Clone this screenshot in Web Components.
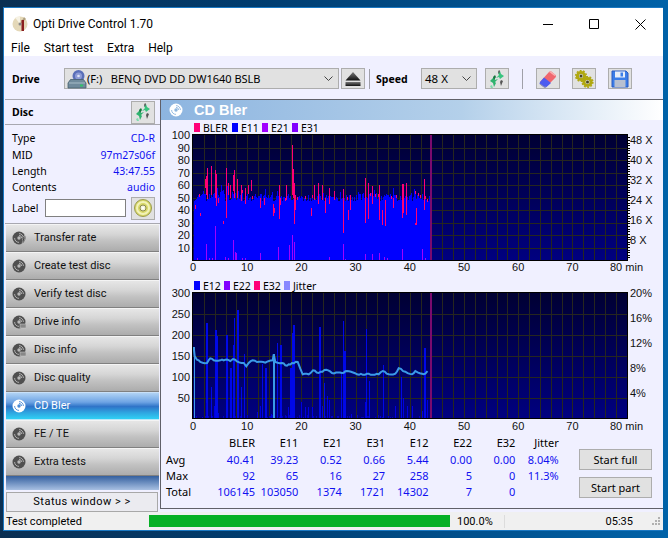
<!doctype html>
<html>
<head>
<meta charset="utf-8">
<title>Opti Drive Control 1.70</title>
<style>
    html, body { margin: 0; height: 100%; overflow: hidden; }
    body {
        width: 668px;
        height: 538px;
        box-sizing: border-box;
        padding: 7px 5px 7px 3px;
        background: linear-gradient(90deg, #0a2f52 0%, #003d70 40%, #0062a8 100%);
        font: 10.5px "Noto Sans", sans-serif;
    }
</style>
</head>
<body>
<od-window>
    <od-titlebar slot="top">Opti Drive Control 1.70</od-titlebar>
    <od-menu slot="top"></od-menu>
    <od-toolbar slot="top"></od-toolbar>

    <od-sidebar slot="side"></od-sidebar>

    <od-panel slot="main" heading="CD Bler">
        <od-chart kind="bler" max="100" step="10" unit="X" style="margin-top:1px">
            <od-legend slot="legend" color="#ff0077" style="width:38px">BLER</od-legend>
            <od-legend slot="legend" color="#0000ff" style="width:30px">E11</od-legend>
            <od-legend slot="legend" color="#a000ff" style="width:30px">E21</od-legend>
            <od-legend slot="legend" color="#8000ff" style="width:30px">E31</od-legend>
        </od-chart>
        <od-chart kind="e12" max="300" step="50" unit="%" style="margin-top:5px">
            <od-legend slot="legend" color="#0000ff" style="width:30px">E12</od-legend>
            <od-legend slot="legend" color="#8000ff" style="width:30px">E22</od-legend>
            <od-legend slot="legend" color="#ff0077" style="width:30px">E32</od-legend>
            <od-legend slot="legend" color="#8888ff" style="width:40px">Jitter</od-legend>
        </od-chart>
        <od-stats></od-stats>
    </od-panel>

    <od-statusbar slot="bottom"></od-statusbar>
</od-window>

<script>
    // small helper, every element stamps its own shadow root
    function stamp(el, css, html) {
        const root = el.attachShadow({mode: 'open'});
        root.innerHTML = `<style>${css}</style>${html}`;
        return root;
    }

    const discShape = (fill, cut) => `
        <circle cx="7" cy="7" r="6.5" fill="${fill}"/>
        <path d="M7 2.6A4.4 4.4 0 0 1 11.4 7M7 4.4A2.6 2.6 0 0 1 9.6 7" fill="none" stroke="${cut}" stroke-width=".9"/>
        <path d="M7 11.4A4.4 4.4 0 0 1 2.6 7" fill="none" stroke="${cut}" stroke-width=".9"/>
        <circle cx="7" cy="7" r="1.7" fill="${cut}"/>`;

    const ICONS = {
        arrows: `<svg width="20" height="20" viewBox="0 0 20 20">
            <path d="M3 12l4-4 1 3 3-1-3 3 1 1-2 4-1-4z" fill="#2fb36f"/>
            <path d="M6 8l2-2 1 2-2 3z" fill="#15763f"/>
            <path d="M17 7l-4 3-1-2-3 1 3-3-1-2 2-2 1 3z" fill="#38c47e"/>
            <path d="M11 3l1-2 1 1-1 3zM14 11l2 1-2 5-1-4z" fill="#555"/>
            <path d="M3 17l2-1 1 3-2 0z" fill="#7fdcae"/></svg>`,
        eject: `<svg width="18" height="16" viewBox="0 0 18 16">
            <defs><linearGradient id="e" x1="0" y1="0" x2="0" y2="1"><stop offset="0" stop-color="#777"/><stop offset="1" stop-color="#111"/></linearGradient></defs>
            <path d="M9 1l7.500 8.500H1.500z" fill="url(#e)"/><rect x="1.500" y="11" width="15" height="4" fill="url(#e)"/></svg>`,
        eraser: `<svg width="20" height="20" viewBox="0 0 20 20">
            <path d="M2 13L11 3q1.500-1.500 3 0l3.500 3q1 1.300 0 2.600L9 17z" fill="#f0686e"/>
            <path d="M11 3q1.500-1.500 3 0l3.500 3-1 1L12 3.500z" fill="#f9b0b0"/>
            <path d="M2 13l4-4.500 7 5.500L8.500 18q-1.500 1-3 0L2 15.500q-1-1 0-2.500z" fill="#4c5cf0"/>
            <path d="M2 15l4 3q1 .5 2 0" fill="none" stroke="#9a9aa8" stroke-width="1"/></svg>`,
        gears: `<svg width="20" height="20" viewBox="0 0 20 20">
            <g fill="none" stroke="#b0a810">
            <circle cx="7" cy="7" r="3.600" stroke-width="3"/><circle cx="7" cy="7" r="5.300" stroke-width="1.600" stroke-dasharray="1.800 1.500"/>
            <circle cx="13.500" cy="13" r="3.600" stroke-width="3"/><circle cx="13.500" cy="13" r="5.300" stroke-width="1.600" stroke-dasharray="1.800 1.500"/>
            </g><circle cx="7" cy="7" r="1.500" fill="#4a4520"/><circle cx="13.500" cy="13" r="1.500" fill="#4a4520"/></svg>`,
        save: `<svg width="18" height="18" viewBox="0 0 18 18">
            <path d="M1 1h14l2 2v14H1z" fill="#3b7de8" stroke="#2a5bc0"/>
            <rect x="4" y="1.500" width="10" height="6" fill="#e8eef8"/><rect x="9.500" y="2.500" width="2.500" height="4" fill="#3b7de8"/>
            <rect x="3.500" y="10" width="11" height="7" fill="#b8c0d0"/></svg>`,
        cd: `<svg width="20" height="20" viewBox="0 0 20 20">
            <circle cx="10" cy="10" r="8.500" fill="#d8d868" stroke="#9a9a50"/>
            <circle cx="10" cy="10" r="6" fill="none" stroke="#f2f2b8" stroke-width="2"/>
            <circle cx="10" cy="10" r="3" fill="#f4f4d8" stroke="#8a8a50"/><circle cx="10" cy="10" r="1.200" fill="#fff"/></svg>`,
        app: `<svg width="16" height="18" viewBox="0 0 16 18">
            <circle cx="8" cy="9" r="7.500" fill="#e4d8b8"/>
            <path d="M8 9L3 2.500A7.500 7.500 0 0 1 8 1.500z" fill="#f6f2e4"/>
            <path d="M8 9l4-7 2 2z" fill="#b0a080"/>
            <rect x="9.500" y="5" width="2.500" height="11" fill="#8a1f1f"/>
            <circle cx="8" cy="9" r="1.500" fill="#888"/></svg>`,
        drive: `<svg width="20" height="20" viewBox="0 0 20 20">
            <circle cx="11.500" cy="7" r="6" fill="#5a6fb8"/><circle cx="11.500" cy="7" r="3.500" fill="#8d9bd6"/><circle cx="11.500" cy="7" r="1.300" fill="#dfe4f6"/>
            <path d="M3.500 10.500h13l2.500 3.500v5H1v-5z" fill="#6f8a9c" stroke="#46606f" stroke-width=".8"/>
            <path d="M2 14h16" stroke="#a8bcc8"/>
            <rect x="13" y="15.500" width="3" height="2" fill="#2fc46a"/></svg>`,
        header: `<svg width="14" height="14" viewBox="0 0 14 14">${discShape('#fff', '#8fb6de')}</svg>`,
        navWhite: `<svg width="14" height="14" viewBox="0 0 14 14">${discShape('#fff', '#4a8ad4')}</svg>`,
        nav: `<svg width="14" height="14" viewBox="0 0 14 14">${discShape('#505050', '#b8b8b8')}</svg>`,
        navRate: `<svg width="14" height="14" viewBox="0 0 14 14">${discShape('#505050', '#b8b8b8')}<path d="M11 6l2-2-1 4 1 1-3 4 1-4-1-1z" fill="#444" stroke="#ccc" stroke-width=".5"/></svg>`,
        navInfo: `<svg width="14" height="14" viewBox="0 0 14 14">${discShape('#505050', '#b8b8b8')}<rect x="8" y="9" width="6" height="4" fill="#888" stroke="#ccc" stroke-width=".5"/></svg>`
    };

    customElements.define('od-icon', class extends HTMLElement {
        connectedCallback() {
            stamp(this, ':host{display:inline-flex;align-items:center;justify-content:center;line-height:0}',
                ICONS[this.getAttribute('name')]);
        }
    });

    customElements.define('od-window', class extends HTMLElement {
        connectedCallback() {
            stamp(this, `
                :host { display: flex; flex-direction: column; width: 660px; height: 524px; box-sizing: border-box;
                    background: #f0f0ff; border: 1px solid #1a78c2; border-right-width: 0; color: #000; }
                .body { flex: 1; display: flex; min-height: 0; }
                .side { width: 156px; flex: none; }
                .main { flex: 1; min-width: 0; }
            `, `
                <slot name="top"></slot>
                <div class="body">
                    <div class="side"><slot name="side"></slot></div>
                    <div class="main"><slot name="main"></slot></div>
                </div>
                <slot name="bottom"></slot>
            `);
        }
    });

    customElements.define('od-titlebar', class extends HTMLElement {
        connectedCallback() {
            stamp(this, `
                :host { display: flex; align-items: center; height: 32px; background: #fff; font: 12px Roboto, sans-serif; }
                od-icon { margin: 0 5px 0 8px; }
                span { flex: 1; }
                svg { display: block; }
                .ctl { width: 46px; height: 30px; display: flex; align-items: center; justify-content: center; }
            `, `
                <od-icon name="app"></od-icon><span><slot></slot></span>
                <div class="ctl"><svg width="10" height="10"><path d="M0 5.500h10" stroke="#000"/></svg></div>
                <div class="ctl"><svg width="10" height="10"><path d="M.5 .5h9v9h-9z" fill="none" stroke="#000"/></svg></div>
                <div class="ctl"><svg width="11" height="11"><path d="M.5 .5l10 10M10.500 .5l-10 10" stroke="#000" fill="none"/></svg></div>
            `);
        }
    });

    customElements.define('od-menu', class extends HTMLElement {
        connectedCallback() {
            stamp(this, `
                :host { display: flex; height: 16px; padding: 0 0 0 7px; gap: 14px; background: #fff; align-items: center;
                    font: 12px Roboto, sans-serif; }
            `, `<span>File</span><span>Start test</span><span>Extra</span><span>Help</span>`);
        }
    });

    customElements.define('od-tool-button', class extends HTMLElement {
        connectedCallback() {
            stamp(this, `
                :host { display: flex; align-items: center; justify-content: center; width: 24px; height: 21px; box-sizing: border-box;
                    background: #e1e1e1; border: 1px solid #adadad; flex: none; }
            `, `<od-icon name="${this.getAttribute('icon')}"></od-icon>`);
        }
    });

    customElements.define('od-combo', class extends HTMLElement {
        connectedCallback() {
            stamp(this, `
                :host { display: flex; align-items: center; height: 21px; box-sizing: border-box; background: #e1e1e1;
                    border: 1px solid #adadad; flex: none; font-size: 11.5px; }
                .t { flex: 1; white-space: pre; }
                svg { margin-right: 5px; }
            `, `<slot name="icon"></slot><span class="t"><slot></slot></span>
                <svg width="9" height="6"><path d="M.5 .5L4.500 4.500 8.500 .5" fill="none" stroke="#444"/></svg>`);
        }
    });

    customElements.define('od-toolbar', class extends HTMLElement {
        connectedCallback() {
            stamp(this, `
                :host { display: flex; align-items: center; height: 43px; padding: 2px 0 0 0; box-sizing: border-box; background: #f0f0ff; }
                b { font: bold 10.5px "Noto Sans", sans-serif; }
                .sep { width: 1px; height: 20px; background: #a0a0a8; flex: none; }
            `, `
                <b style="margin-left:8px;width:52px">Drive</b>
                <od-combo style="width:275px;padding-left:2px;font-size:11px"><od-icon slot="icon" name="drive"></od-icon>(F:)   BENQ DVD DD DW1640 BSLB</od-combo>
                <od-tool-button icon="eject" style="margin-left:2px"></od-tool-button>
                <span class="sep" style="margin:0 6px 0 4px"></span>
                <b style="width:45px">Speed</b>
                <od-combo style="width:56px;padding-left:3px">48 X</od-combo>
                <od-tool-button icon="arrows" style="margin-left:8px"></od-tool-button>
                <span class="sep" style="margin:0 13px"></span>
                <od-tool-button icon="eraser"></od-tool-button>
                <od-tool-button icon="gears" style="margin-left:12px"></od-tool-button>
                <od-tool-button icon="save" style="margin-left:12px"></od-tool-button>
            `);
        }
    });

    customElements.define('od-nav-button', class extends HTMLElement {
        connectedCallback() {
            const active = this.hasAttribute('active');
            stamp(this, `
                :host { display: flex; align-items: center; height: 28px; box-sizing: border-box; gap: 8px; padding-left: 6px;
                    border-bottom: 1px solid #808080; border-top: 1px solid #f4f4f4;
                    background: linear-gradient(#e6e6e6, #d6d6d6 35%, #c2c2c2 60%, #acacac); color: #111; font: 11px Roboto, sans-serif; }
                :host([active]) { color: #fff; border-top-color: #c8e0f8; border-bottom-color: #b8e8fa;
                    background: linear-gradient(#b0d2f4, #6ea4e4 35%, #2f74c8 52%, #2ea4e0 75%, #2fd0f4); }
            `, `<od-icon name="${active ? 'navWhite' : this.getAttribute('icon') || 'nav'}"></od-icon><span><slot></slot></span>`);
        }
    });

    customElements.define('od-sidebar', class extends HTMLElement {
        connectedCallback() {
            stamp(this, `
                :host { display: flex; flex-direction: column; height: 100%; box-sizing: border-box; padding-left: 1px; }
                .head { display: flex; align-items: center; justify-content: space-between; height: 26px; box-sizing: border-box;
                    border-top: 1px solid #a8a8b0; border-bottom: 1px solid #a8a8b0; padding: 0 5px 0 7px; font-weight: bold; }
                .head od-tool-button { height: 23px; }
                dl { margin: 0; padding: 5px 5px 0 7px; display: grid; grid-template-columns: 1fr auto; grid-auto-rows: 16.4px; align-items: center; }
                dt, dd { margin: 0; }
                dd { color: #1010f0; text-align: right; }
                .label { display: flex; align-items: center; padding: 1px 5px 3px 7px; height: 23px; }
                .label span { width: 33px; }
                .label i { display: block; width: 81px; height: 18px; box-sizing: border-box; background: #fff; border: 1px solid #808080; margin-right: 5px; }
                .label od-tool-button { height: 23px; }
                .nav { display: flex; flex-direction: column; padding: 0 1px 0 1px; border-top: 1px solid #a8a8b0; }
                .strip { height: 14px; margin: 0 1px; background: linear-gradient(#34609f, #a8c0e2); }
                .status { margin: 2px 2px 0 1px; height: 20px; box-sizing: border-box; display: flex; align-items: center; justify-content: center;
                    background: #ebebf0; border: 1px solid #a8a8a8; font: 11px Roboto, sans-serif; letter-spacing: .5px; }
            `, `
                <div class="head">Disc<od-tool-button icon="arrows"></od-tool-button></div>
                <dl>
                    <dt>Type</dt><dd>CD-R</dd>
                    <dt>MID</dt><dd>97m27s06f</dd>
                    <dt>Length</dt><dd>43:47.55</dd>
                    <dt>Contents</dt><dd>audio</dd>
                </dl>
                <div class="label"><span>Label</span><i></i><od-tool-button icon="cd"></od-tool-button></div>
                <div class="nav">
                    <od-nav-button icon="navRate">Transfer rate</od-nav-button>
                    <od-nav-button>Create test disc</od-nav-button>
                    <od-nav-button>Verify test disc</od-nav-button>
                    <od-nav-button icon="navInfo">Drive info</od-nav-button>
                    <od-nav-button icon="navInfo">Disc info</od-nav-button>
                    <od-nav-button>Disc quality</od-nav-button>
                    <od-nav-button active>CD Bler</od-nav-button>
                    <od-nav-button>FE / TE</od-nav-button>
                    <od-nav-button>Extra tests</od-nav-button>
                </div>
                <div class="strip"></div>
                <div class="status">Status window &gt; &gt;</div>
            `);
        }
    });

    customElements.define('od-panel', class extends HTMLElement {
        connectedCallback() {
            stamp(this, `
                :host { display: flex; flex-direction: column; box-sizing: border-box; background: #f0f0ff;
                    border-top: 1px solid #606068; border-left: 1px solid #606068; border-bottom: 1px solid #606068; margin-bottom: 3px; height: calc(100% - 3px); }
                header { display: flex; align-items: center; height: 20px; flex: none; padding-left: 8px; gap: 11px;
                    background: linear-gradient(90deg, #8db5e0, #b4d0ea 60%, #ffffff); color: #fff; font: bold 14.5px "Liberation Sans", sans-serif; }
            `, `
                <header><od-icon name="header"></od-icon>${this.getAttribute('heading')}</header>
                <slot></slot>
            `);
        }
    });

    customElements.define('od-legend', class extends HTMLElement {
        connectedCallback() {
            stamp(this, `
                :host { display: inline-flex; align-items: center; gap: 3px; font-size: 10.5px; flex: none; height: 13px; }
                i { width: 6px; height: 9px; flex: none; }
            `, `<i style="background:${this.getAttribute('color')}"></i><slot></slot>`);
        }
    });

    // everything below is read off the reference, in its 3x zoom coordinates
    const PINK = [[90,41,44],[105,35,38],[118,58,65],[122,52,67],[125,50,74],[136,52,75],[148,50,72],[151,43,69],[157,46,50],[172,29,31],[183,34,74],[187,52,62],[193,50,60],[203,55,68],[206,50,72],[215,50,65],[226,47,60],[240,45,58],[248,53,60],[256,55,64],[285,42,50],[297,44,50],[323,35,45],[327,38,42],[340,33,60],[345,44,50],[362,48,60],[379,52,92],[382,50,73],[385,29,62],[390,40,52],[437,35,42],[445,48,60],[458,45,62],[470,48,60],[478,38,50],[492,45,58],[507,48,55],[532,22,57],[548,32,40],[553,40,52],[600,30,66],[607,33,62],[620,45,59],[640,32,60],[650,28,40],[660,27,48],[683,42,50],[710,34,61],[714,38,61],[722,36,62],[748,28,30],[752,28,42],[775,40,65],[794,42,50]];
    const PURPLE = [[95,2],[122,13],[130,2],[140,2],[148,27],[180,3],[188,2],[202,16],[208,7],[213,6],[230,2],[240,2],[285,6],[338,11],[372,12],[380,20],[387,15],[492,3],[532,13],[540,1],[600,5],[620,5],[640,6],[655,3],[665,2],[710,9],[770,9],[779,2]];
    const E12 = [[123,227],[148,210],[152,196],[182,198],[195,120],[205,240],[215,258],[203,175],[235,155],[227,75],[137,75],[122,37],[145,30],[157,14],[110,4],[290,130],[298,120],[285,30],[275,15],[318,12],[335,180],[343,175],[367,28],[375,120],[380,205],[383,222],[387,70],[407,40],[420,28],[428,28],[440,28],[460,217],[470,30],[475,85],[485,55],[492,45],[527,110],[532,232],[536,160],[538,70],[556,10],[602,213],[598,40],[611,90],[645,6],[652,128],[690,30],[708,100],[712,50],[725,30],[740,30],[770,18],[775,140],[776,167],[785,45]];
    const JITTER = [[85,200],[88,228],[95,238],[105,245],[125,248],[135,234],[145,240],[165,240],[180,238],[195,242],[203,236],[215,243],[235,248],[243,258],[250,248],[262,240],[275,245],[300,247],[322,240],[325,222],[330,245],[350,248],[365,256],[380,248],[397,245],[405,265],[412,282],[430,282],[443,270],[460,278],[483,268],[500,278],[530,278],[545,272],[575,282],[640,282],[652,272],[670,282],[690,280],[700,264],[720,274],[740,282],[750,272],[770,280],[780,280],[793,268]];

    customElements.define('od-chart', class extends HTMLElement {
        connectedCallback() {
            const kind = this.getAttribute('kind');
            const max = +this.getAttribute('max');
            const step = +this.getAttribute('step');
            const isBler = kind === 'bler';
            const W = 501, H = 140, L = 32, T = 1, PW = 434, PH = 125;
            const scale = isBler ? 1.253 : .42;
            const gy = v => T + PH + (isBler ? .3 : .6) - v * scale;
            const gid = 'g' + kind;
            let s = `<defs><linearGradient id="${gid}" x1="0" y1="0" x2="0" y2="1"><stop offset="0" stop-color="#000033"/><stop offset="1" stop-color="#000080"/></linearGradient></defs>`;
            s += `<rect x="${L}" y="${T}" width="${PW}" height="${PH}" fill="url(#${gid})"/>`;

            // grid
            for (let m = 2; m < 80; m += 2) {
                const x = Math.round(L + m * 5.42);
                s += `<path d="M${x + .5} ${T}V${T + PH}" stroke="#26261f"/>`;
            }
            for (let v = step; v < max; v += step) {
                const y = Math.round(gy(v));
                s += `<path d="M${L} ${y + .5}H${L + PW}" stroke="#26261f"/>`;
            }

            let seed = 7;
            const rnd = () => (seed = (seed * 16807) % 2147483647) / 2147483647;
            const px = zx => Math.round(L + (zx - 83) / 3);

            if (isBler) {
                for (let x = L + 1; x <= L + 237; x++) {
                    const min = (x - L) / 5.42;
                    let v = 47 + rnd() * 6;
                    if (rnd() < .12) v += rnd() * 6;
                    if (min > 1.5 && min < 10 && rnd() < .5) v += rnd() * 9;
                    const y = gy(v);
                    s += `<rect x="${x}" y="${y}" width="1" height="${T + PH - y}" fill="#0000ff"/>`;
                    // short pink caps sit on many of the columns
                    if (rnd() < .1) s += `<rect x="${x}" y="${y - 2}" width="1" height="3" fill="#ff0077"/>`;
                }
                PINK.forEach(([zx, lo, hi]) => {
                    s += `<rect x="${px(zx)}" y="${gy(hi)}" width="1" height="${(hi - lo) * scale}" fill="#ff0077"/>`;
                });
                PURPLE.forEach(([zx, h]) => {
                    s += `<rect x="${px(zx)}" y="${gy(h)}" width="1" height="${h * scale}" fill="#a000ff"/>`;
                });
            } else {
                for (let x = L + 1; x <= L + 237; x += 1) {
                    if (rnd() < .25) {
                        const h = 1 + rnd() * 2;
                        s += `<rect x="${x}" y="${T + PH - h}" width="1" height="${h}" fill="#0000c8"/>`;
                    }
                }
                E12.forEach(([zx, v]) => {
                    const y = gy(v);
                    const wide = v > 90 && rnd() > .4;
                    s += `<rect x="${px(zx)}" y="${y}" width="${wide ? 2 : 1}" height="${T + PH - y}" fill="${v > 60 ? '#0008e8' : '#0000e0'}"/>`;
                });
                // jitter trace, stepped a little so it doesn't look like a clean polyline
                const toX = zx => L + (zx - 83) / 3;
                const toY = zy => T + (zy - 38) / 3;
                const pts = [];
                for (let i = 0; i < JITTER.length - 1; i++) {
                    const [ax, ay] = JITTER[i], [bx, by] = JITTER[i + 1];
                    const n = Math.max(1, Math.round((bx - ax) / 6));
                    for (let k = 0; k < n; k++) {
                        const t = k / n;
                        const wob = k && k < n ? (rnd() < .5 ? 1.5 : -1.5) : 0;
                        pts.push(`${toX(ax + (bx - ax) * t).toFixed(1)},${toY(ay + (by - ay) * t + wob).toFixed(1)}`);
                    }
                }
                s += `<rect x="${L + 1}" y="${toY(200)}" width="1" height="${T + PH - toY(200)}" fill="#3a9ae8"/>`;
                s += `<rect x="${px(323)}" y="${toY(222)}" width="2" height="${T + PH - toY(222)}" fill="#3a9ae8"/>`;
                s += `<polyline points="${pts.join(' ')}" fill="none" stroke="#3a9ae8" stroke-width="2"/>`;
            }

            // 43.8 min marker
            s += `<rect x="${L + 237}" y="${T}" width="2" height="${PH}" fill="#7a0a6e"/>`;
            // frame
            s += `<path d="M${L - .5} ${T - .5}H${L + PW + .5}V${T + PH + .5}H${L - .5}Z" fill="none" stroke="#000" stroke-width="1.5"/>`;

            // axes
            for (let v = step; v <= max; v += step) {
                s += `<text x="29" y="${gy(v) + 4}" text-anchor="end">${v}</text>`;
            }
            const ly = T + PH + (isBler ? 10.5 : 11.5);
            for (let m = 0; m <= 70; m += 10) {
                s += `<text x="${L + m * 5.42}" y="${ly}" text-anchor="middle">${m}</text>`;
            }
            s += `<text x="449" y="${ly}">80 min</text>`;
            if (isBler) {
                for (let i = 1; i < 48; i++) {
                    const y = Math.round(T + PH - i * 2.61);
                    s += `<path d="M${L + PW} ${y + .5}h${i % 8 === 0 ? 4 : 3}" stroke="#000"/>`;
                }
                [48, 40, 32, 24, 16, 8].forEach((n, i) => {
                    s += `<text x="469" y="${T + 9 + i * 20}">${n} X</text>`;
                });
            } else {
                ['20%', '16%', '12%', '8%', '4%'].forEach((n, i) => {
                    s += `<text x="469" y="${T + 4 + i * 25}">${n}</text>`;
                });
            }

            stamp(this, `
                :host { display: block; flex: none; }
                .legend { display: flex; height: 13px; padding-left: 33px; align-items: center; }
                svg { display: block; overflow: visible; font: 11px "Liberation Sans", sans-serif; fill: #111; }
                rect, path { shape-rendering: crispEdges; }
            `, `<div class="legend"><slot name="legend"></slot></div>
                <svg width="${W}" height="${H}" viewBox="0 0 ${W} ${H}">${s}</svg>`);
        }
    });

    customElements.define('od-stats', class extends HTMLElement {
        connectedCallback() {
            const head = ['BLER', 'E11', 'E21', 'E31', 'E12', 'E22', 'E32', 'Jitter'];
            const rows = [
                ['Avg', '40.41', '39.23', '0.52', '0.66', '5.44', '0.00', '0.00', '8.04%'],
                ['Max', '92', '65', '16', '27', '258', '5', '0', '11.3%'],
                ['Total', '106145', '103050', '1374', '1721', '14302', '7', '0', '']
            ];
            let cells = '<span></span>' + head.map(h => `<span class="h">${h}</span>`).join('');
            rows.forEach(r => {
                cells += `<span>${r[0]}</span>` + r.slice(1).map(v => `<span class="v">${v}</span>`).join('');
            });
            stamp(this, `
                :host { display: flex; padding: 1px 10px 0 5px; font-size: 11px; }
                .g { display: grid; grid-template-columns: 45.6px repeat(8, 43.4px); grid-template-rows: 18px 16px 16px 16px; align-items: center; flex: none; }
                .h, .v { text-align: right; }
                .v { color: #1010f0; }
                .b { margin-left: auto; padding-top: 16px; display: flex; flex-direction: column; gap: 7px; margin-right: 1px; }
                .b div { width: 73px; height: 21px; box-sizing: border-box; background: #e1e1e1; border: 1px solid #adadad;
                    display: flex; align-items: center; justify-content: center; }
            `, `<div class="g">${cells}</div><div class="b"><div>Start full</div><div>Start part</div></div>`);
        }
    });

    customElements.define('od-statusbar', class extends HTMLElement {
        connectedCallback() {
            stamp(this, `
                :host { display: flex; align-items: center; height: 18px; flex: none; background: #f0f0f0; font: 11px Roboto, sans-serif; }
                .s { width: 145px; padding-left: 2px; box-sizing: border-box; flex: none; }
                .bar { width: 301px; height: 12px; background: #06b025; flex: none; }
                .p { width: 54px; padding-left: 7px; box-sizing: border-box; flex: none; }
                .t { width: 128px; text-align: right; flex: none; border-left: 1px solid #dcdcdc; }
                .g { margin-left: auto; margin-right: 2px; }
            `, `
                <span class="s">Test completed</span>
                <span class="bar"></span>
                <span class="p">100.0%</span>
                <span class="t">05:35</span>
                <svg class="g" width="10" height="10"><g fill="#b0b0b0"><rect x="7" y="1" width="2" height="2"/><rect x="4" y="4" width="2" height="2"/><rect x="7" y="4" width="2" height="2"/><rect x="1" y="7" width="2" height="2"/><rect x="4" y="7" width="2" height="2"/><rect x="7" y="7" width="2" height="2"/></g></svg>
            `);
        }
    });
</script>
</body>
</html>
